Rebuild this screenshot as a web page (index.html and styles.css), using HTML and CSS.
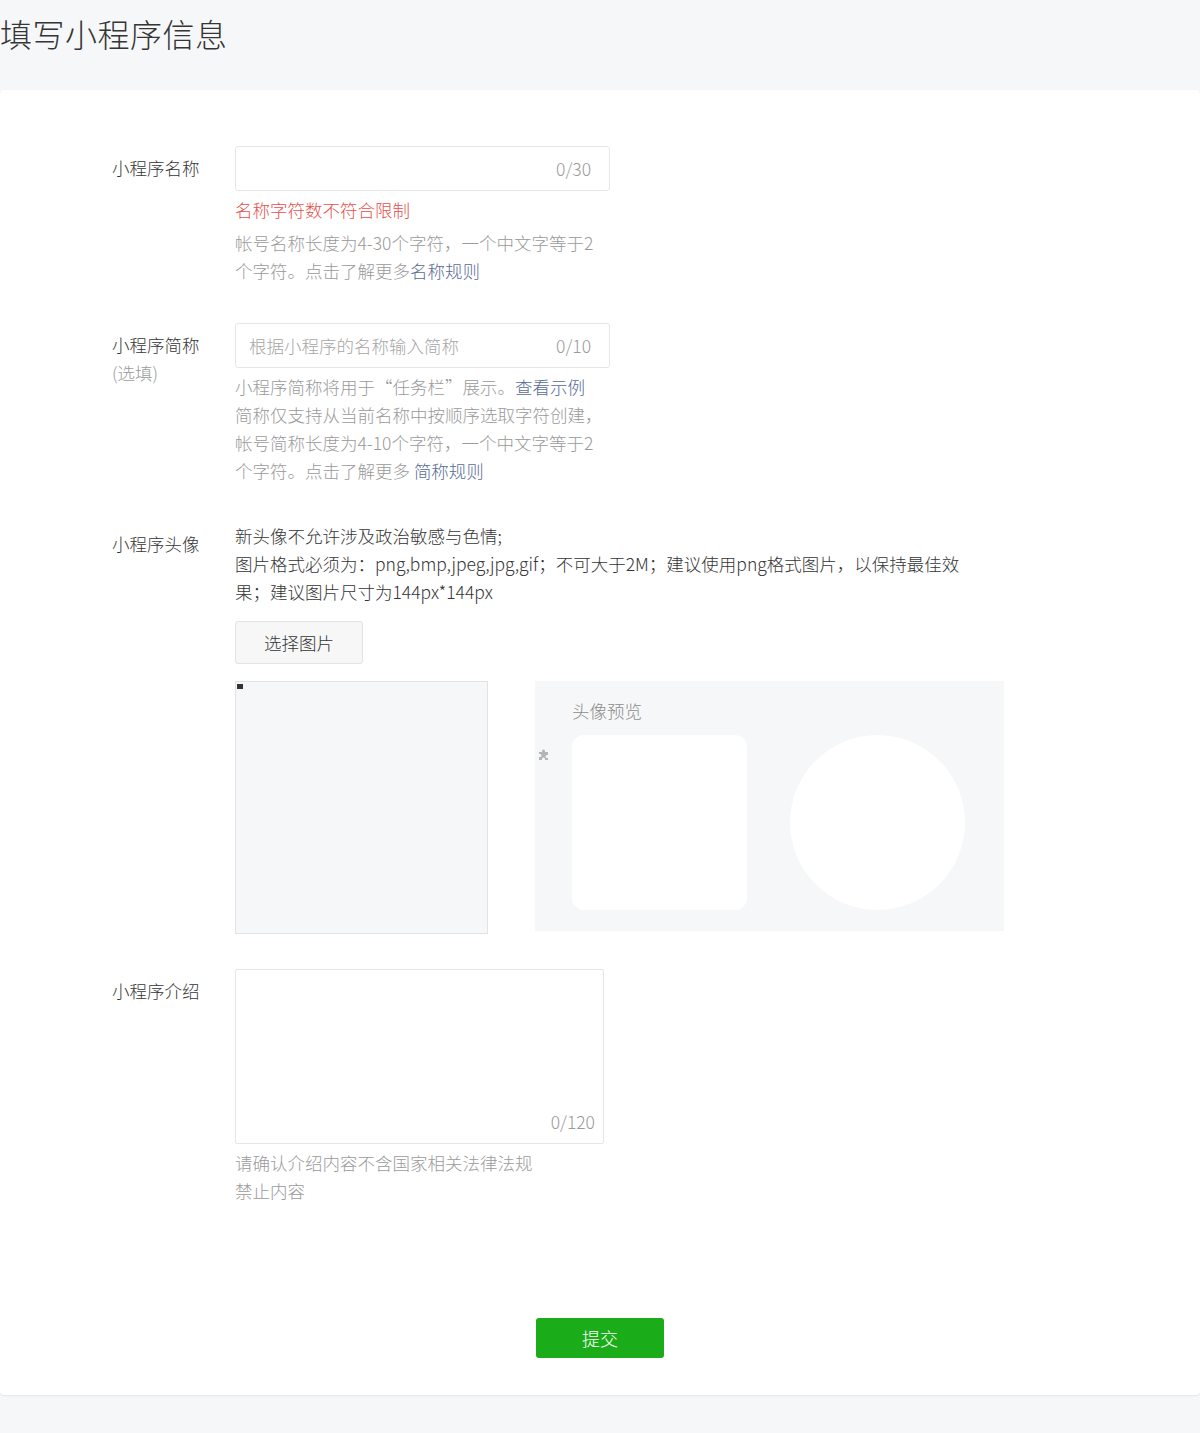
FILE: index.html
```html
<!DOCTYPE html>
<html lang="zh-CN">
<head>
<meta charset="utf-8">
<title>填写小程序信息</title>
<link rel="stylesheet" href="styles.css">
</head>
<body>
<h1 class="page-title">填写小程序信息</h1>
<div class="card">
  <div class="row row-name">
    <div class="label">小程序名称</div>
    <div class="field">
      <div class="input">
        <span class="placeholder"></span>
        <span class="counter">0/30</span>
      </div>
      <div class="error">名称字符数不符合限制</div>
      <div class="hint">帐号名称长度为4-30个字符，一个中文字等于2<br>个字符。点击了解更多<a class="link" href="#">名称规则</a></div>
    </div>
  </div>

  <div class="row row-short">
    <div class="label">小程序简称<br><span class="label-sub">(选填)</span></div>
    <div class="field">
      <div class="input">
        <span class="placeholder">根据小程序的名称输入简称</span>
        <span class="counter">0/10</span>
      </div>
      <div class="hint">小程序简称将用于“任务栏”展示。<a class="link" href="#">查看示例</a><br>简称仅支持从当前名称中按顺序选取字符创建，<br>帐号简称长度为4-10个字符，一个中文字等于2<br>个字符。点击了解更多 <a class="link" href="#">简称规则</a></div>
    </div>
  </div>

  <div class="row row-avatar">
    <div class="label">小程序头像</div>
    <div class="field field-wide">
      <div class="desc">新头像不允许涉及政治敏感与色情;<br>图片格式必须为：png,bmp,jpeg,jpg,gif；不可大于2M；建议使用png格式图片，以保持最佳效<br>果；建议图片尺寸为144px*144px</div>
      <button class="btn-default" type="button">选择图片</button>
      <div class="avatar-area">
        <div class="crop-box"><span class="broken-img"></span></div>
        <div class="preview">
          <svg class="plugin-icon" width="13" height="13" viewBox="0 0 13 13" aria-hidden="true"><path d="M1 4h3V3a1.5 1.5 0 0 1 3 0v1h3v3h-1a1.5 1.5 0 0 0 0 3h1v2H7v-1a1.5 1.5 0 0 0-3 0v1H1V9h1a1.5 1.5 0 0 0 0-3H1z" fill="#b5b5b5"/></svg>
          <div class="preview-title">头像预览</div>
          <div class="preview-shapes">
            <div class="shape-square"></div>
            <div class="shape-circle"></div>
          </div>
        </div>
      </div>
    </div>
  </div>

  <div class="row row-intro">
    <div class="label">小程序介绍</div>
    <div class="field">
      <div class="textarea"><span class="counter">0/120</span></div>
      <div class="hint">请确认介绍内容不含国家相关法律法规<br>禁止内容</div>
    </div>
  </div>

  <div class="actions">
    <button class="btn-primary" type="button">提交</button>
  </div>
</div>
</body>
</html>
```

FILE: styles.css
```css
* { box-sizing: border-box; }

html, body {
  margin: 0;
  padding: 0;
  background: #f6f7f9;
}

body {
  font-family: "Noto Sans CJK SC", "Noto Sans", sans-serif;
  font-weight: 300;
  color: #353535;
  font-size: 17.5px;
  line-height: 28px;
  height: 1433px;
}

.page-title {
  margin: 0;
  height: 90px;
  padding-top: 12px;
  font-size: 32px;
  line-height: 42px;
  font-weight: 300;
  color: #353535;
  letter-spacing: 0.5px;
}

.card {
  background: #fff;
  border-radius: 4px;
  box-shadow: 0 1px 2px rgba(0, 0, 0, 0.08);
  padding: 56px 0 37px 112px;
}

.row {
  display: flex;
}

.row-name { margin-bottom: 38px; }
.row-short { margin-bottom: 37px; }
.row-avatar { margin-bottom: 35px; }
.row-intro { margin-bottom: 113px; }

.label {
  width: 123px;
  flex-shrink: 0;
  padding-top: 8px;
  color: #353535;
}

.label-sub { color: #9a9a9a; }

.field {
  width: 375px;
}

.field-wide {
  width: 780px;
}

.input {
  height: 45px;
  border: 1px solid #e4e6ea;
  border-radius: 3px;
  display: flex;
  align-items: center;
  justify-content: space-between;
  padding: 0 18px 0 13px;
}

.placeholder { color: #a6a6a6; }

.counter { color: #9a9a9a; }

.error {
  margin-top: 5px;
  color: #e6504c;
}

.hint {
  margin-top: 5px;
  color: #9a9a9a;
  white-space: nowrap;
}

.link {
  color: #576b95;
  text-decoration: none;
}

.desc {
  white-space: nowrap;
  color: #353535;
}

.btn-default {
  display: block;
  margin-top: 15px;
  width: 128px;
  height: 43px;
  border: 1px solid #e3e3e3;
  border-radius: 3px;
  background: #f7f7f7;
  color: #353535;
  font: inherit;
  padding: 0;
}

.avatar-area {
  margin-top: 17px;
  display: flex;
  gap: 47px;
  align-items: flex-start;
}

.crop-box {
  width: 253px;
  height: 253px;
  border: 1px solid #e2e3e6;
  background: #f6f7f9;
  padding: 2px 0 0 1px;
}

.broken-img {
  display: block;
  width: 6px;
  height: 5px;
  background: #333;
}

.preview {
  position: relative;
  width: 469px;
  height: 250px;
  background: #f6f7f9;
  padding: 16px 0 0 37px;
}

.plugin-icon {
  position: absolute;
  left: 3px;
  top: 67px;
}

.preview-title {
  color: #8c8c8c;
}

.preview-shapes {
  margin-top: 10px;
  display: flex;
  gap: 43px;
}

.shape-square {
  width: 175px;
  height: 175px;
  background: #fff;
  border-radius: 12px;
}

.shape-circle {
  width: 175px;
  height: 175px;
  background: #fff;
  border-radius: 50%;
}

.row-intro .field { width: 369px; }

.textarea {
  height: 175px;
  border: 1px solid #e4e6ea;
  border-radius: 2px;
  display: flex;
  align-items: flex-end;
  justify-content: flex-end;
  padding: 0 8px 7px 0;
}

.actions {
  display: flex;
  justify-content: center;
  margin-left: -112px;
}

.btn-primary {
  width: 128px;
  height: 40px;
  border: 0;
  border-radius: 3px;
  background: #1aad19;
  color: #fff;
  font: inherit;
  font-size: 18px;
  padding: 0;
}
```
